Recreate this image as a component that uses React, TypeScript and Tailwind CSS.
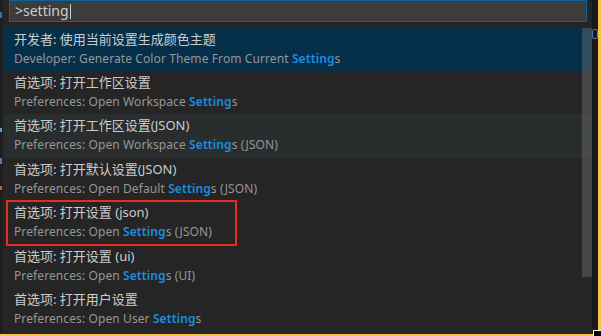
import React from 'react'

// 命令面板条目
type Item = {
  label: string
  pre: string
  post: string
  height: string
  hover?: boolean
  selected?: boolean
  boxed?: boolean
}

const items: Item[] = [
  { label: '开发者: 使用当前设置生成颜色主题', pre: 'Developer: Generate Color Theme From Current ', post: 's', height: 'h-[43px]', selected: true },
  { label: '首选项: 打开工作区设置', pre: 'Preferences: Open Workspace ', post: 's', height: 'h-[43px]' },
  { label: '首选项: 打开工作区设置(JSON)', pre: 'Preferences: Open Workspace ', post: 's (JSON)', height: 'h-[44px]', hover: true },
  { label: '首选项: 打开默认设置(JSON)', pre: 'Preferences: Open Default ', post: 's (JSON)', height: 'h-[43px]' },
  { label: '首选项: 打开设置 (json)', pre: 'Preferences: Open ', post: 's (JSON)', height: 'h-[44px]', boxed: true },
  { label: '首选项: 打开设置 (ui)', pre: 'Preferences: Open ', post: 's (UI)', height: 'h-[43px]' },
  { label: '首选项: 打开用户设置', pre: 'Preferences: Open User ', post: 's', height: 'h-[44px]' },
]

function Row({ item }: { item: Item }) {
  const bg = item.selected ? 'bg-[#062f4a]' : item.hover ? 'bg-[#2a2d2e]' : ''
  return (
    <div className={`relative ${item.height} ${bg} pl-[11px] pt-[1px] leading-[20px]`}>
      <div className="text-[13px] text-[#cccccc] whitespace-nowrap">{item.label}</div>
      <div className="text-[12px] tracking-[0.1px] text-[#969696] whitespace-nowrap">
        {item.pre}
        <span className="font-semibold text-[#1a8ee0]">Setting</span>
        {item.post}
      </div>
      {item.boxed && (
        <div className="absolute left-[3px] top-[-1px] w-[231px] h-[46px] border-2 border-[#ec2a24] rounded-[1px]" />
      )}
    </div>
  )
}

export default function App() {
  return (
    <div
      className="relative w-[601px] h-[336px] bg-[#1e1e1e] flex overflow-hidden"
      style={{ fontFamily: '"Noto Sans", "Noto Sans CJK SC", sans-serif' }}
    >
      {/* 左侧编辑器边缘 */}
      <div className="relative w-[3px] h-full bg-[#1e1e1e]">
        <div className="absolute top-[12px] left-0 w-[2px] h-[6px] bg-[#3b6f9e]" />
        <div className="absolute top-[128px] left-0 w-[2px] h-[4px] bg-[#569cd6]" />
        <div className="absolute top-[158px] left-0 w-[2px] h-[6px] bg-[#4f7fb0]" />
        <div className="absolute top-[186px] left-0 w-[2px] h-[4px] bg-[#c05a4a]" />
      </div>

      {/* 命令面板 */}
      <div className="relative w-[589px] h-[334px] bg-[#252526] flex flex-col">
        <div className="pl-[6px] pr-[5px]">
          <div className="h-[22px] bg-[#3c3c3c] border border-[#0e639c] flex items-center pl-[5px]">
            <span className="text-[14px] text-[#cccccc] leading-none">&gt;setting</span>
            <span className="w-[1px] h-[15px] bg-[#cccccc] ml-[1px]" />
          </div>
        </div>
        <div className="relative mt-[6px]">
          {items.map((item) => (
            <Row key={item.label} item={item} />
          ))}
          {/* 滚动条 */}
          <div className="absolute right-0 top-0 w-[10px] h-[249px] bg-[#79797966]" />
        </div>
      </div>

      {/* 右侧边缘 */}
      <div className="relative w-[6px] h-full bg-[#191919]">
        <div className="absolute top-[29px] left-0 w-[6px] h-[10px] border border-[#4a72c8] rounded-[2px]" />
      </div>
      <div className="w-[3px] h-full bg-[#f6c34f]" />

      {/* 底部状态边 */}
      <div className="absolute left-0 bottom-0 w-full h-[2px] bg-[#f6c34f]" />
      <div className="absolute right-0 bottom-0 w-[8px] h-[6px] bg-black border-l border-t border-white" />
    </div>
  )
}
